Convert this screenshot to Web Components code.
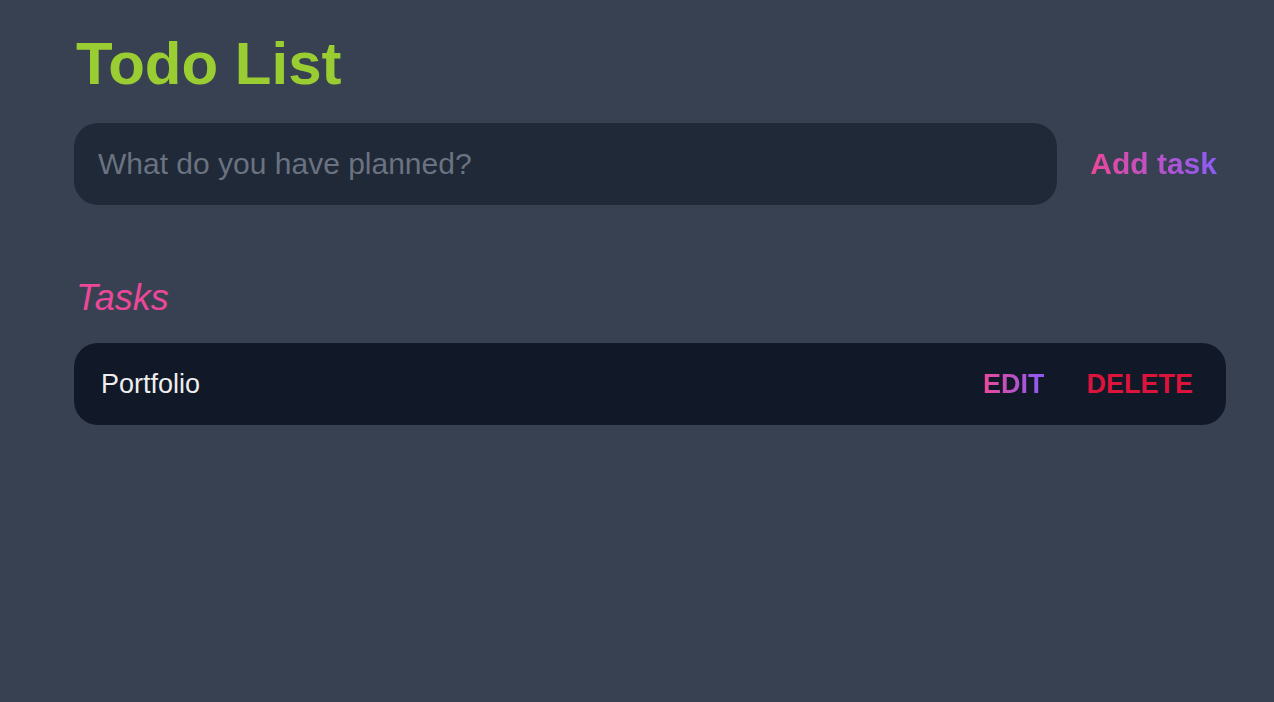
<!DOCTYPE html>
<html lang="en">
<head>
<meta charset="utf-8">
<title>Todo List</title>
<style>
  body {
    margin: 0;
    min-height: 100vh;
    background: #374151;
    color: #eee;
    font-family: "Liberation Sans", Arial, sans-serif;
    --dark: #1f2937;
    --darker: #111827;
    --grey: #6b7280;
    --pink: #ec4899;
    --purple: #8b5cf6;
  }
</style>
</head>
<body>
<todo-app></todo-app>
<script>
class GradientButton extends HTMLElement {
  constructor() {
    super();
    this.attachShadow({ mode: "open" }).innerHTML = `
      <style>
        :host { display: block; }
        button {
          display: block;
          margin: 0;
          padding: 0;
          border: 0;
          font: inherit;
          font-weight: 700;
          cursor: pointer;
          color: transparent;
          background: linear-gradient(to right, var(--pink), var(--purple));
          background-clip: text;
          -webkit-background-clip: text;
        }
        :host([danger]) button { background: none; color: crimson; }
      </style>
      <button type="button"><slot></slot></button>`;
  }
}
customElements.define("gradient-button", GradientButton);

class TaskItem extends HTMLElement {
  constructor() {
    super();
    this.attachShadow({ mode: "open" }).innerHTML = `
      <style>
        :host {
          display: flex;
          align-items: center;
          justify-content: space-between;
          padding: 24px 33px 24px 24px;
          border-radius: 24px;
          background: var(--darker);
          font-size: 27px;
          line-height: 34px;
        }
        input {
          flex: 1;
          min-width: 0;
          height: 34px;
          margin: 0;
          padding: 0 3px;
          border: 0;
          outline: 0;
          background: none;
          color: #eee;
          font: inherit;
        }
        .actions { display: flex; gap: 42px; }
      </style>
      <input type="text" aria-label="Task" readonly>
      <div class="actions">
        <gradient-button>EDIT</gradient-button>
        <gradient-button danger>DELETE</gradient-button>
      </div>`;
  }
  connectedCallback() {
    this.shadowRoot.querySelector("input").value = this.getAttribute("text");
  }
}
customElements.define("task-item", TaskItem);

class TaskForm extends HTMLElement {
  constructor() {
    super();
    this.attachShadow({ mode: "open" }).innerHTML = `
      <style>
        :host {
          display: flex;
          align-items: center;
          gap: 33px;
          padding-right: 9px;
          font-size: 30px;
          line-height: 34px;
        }
        input {
          flex: 1;
          min-width: 0;
          height: 82px;
          box-sizing: border-box;
          margin: 0;
          padding: 24px;
          border: 0;
          outline: 0;
          border-radius: 24px;
          background: var(--dark);
          color: #eee;
          font: inherit;
        }
        input::placeholder { color: var(--grey); opacity: 1; }
      </style>
      <input type="text" aria-label="New task" placeholder="What do you have planned?">
      <gradient-button>Add task</gradient-button>`;
  }
}
customElements.define("task-form", TaskForm);

class TodoApp extends HTMLElement {
  constructor() {
    super();
    this.attachShadow({ mode: "open" }).innerHTML = `
      <style>
        :host { display: block; padding: 24px 48px 24px 74px; }
        h1 {
          margin: 0 0 19px;
          padding-left: 2px;
          color: yellowgreen;
          font-size: 60px;
          line-height: 80px;
        }
        h2 {
          margin: 72px 0 24px;
          padding-left: 2px;
          color: var(--pink);
          font-size: 36px;
          font-style: italic;
          font-weight: 400;
          line-height: 42px;
        }
      </style>
      <header>
        <h1>Todo List</h1>
        <task-form></task-form>
      </header>
      <main>
        <h2>Tasks</h2>
        <task-item text="Portfolio"></task-item>
      </main>`;
  }
}
customElements.define("todo-app", TodoApp);
</script>
</body>
</html>
